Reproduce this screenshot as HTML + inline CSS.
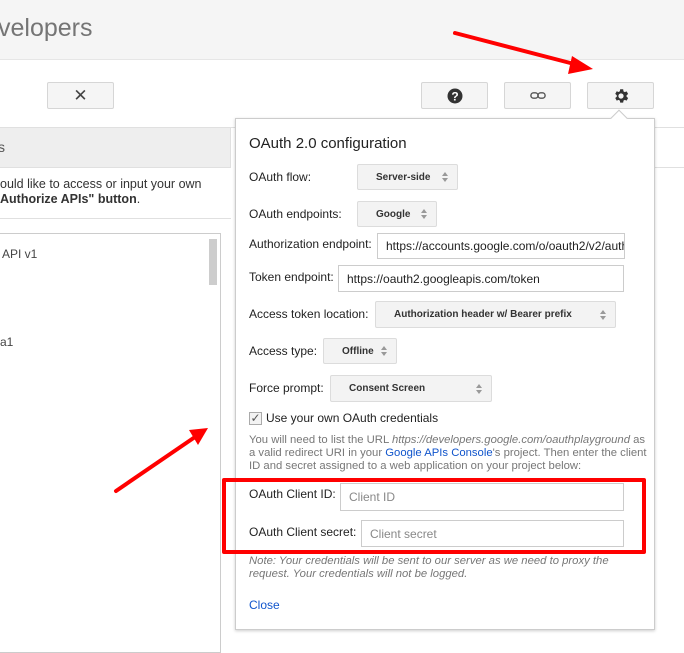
<!DOCTYPE html>
<html><head><style>
*{box-sizing:border-box;margin:0;padding:0}
body{width:684px;height:646px;overflow:hidden;background:#fff;font-family:"Liberation Sans",sans-serif;position:relative;color:#222}
.a{position:absolute}
.btn{position:absolute;top:82px;height:27px;background:#f5f5f5;border:1px solid #d6d6d6;border-radius:2px;display:flex;align-items:center;justify-content:center;color:#444}
.lbl{position:absolute;left:249px;font-size:12px;color:#222}
.sel{position:absolute;background:#f3f3f3;border:1px solid #dcdcdc;border-radius:2px;font-size:10px;font-weight:bold;color:#333;padding-left:18px;display:flex;align-items:center}
.sel:after{content:"";position:absolute;right:9px;top:50%;margin-top:-5px;width:0;height:0;border-left:3px solid transparent;border-right:3px solid transparent;border-bottom:4px solid #999}
.sel:before{content:"";position:absolute;right:9px;top:50%;margin-top:1px;width:0;height:0;border-left:3px solid transparent;border-right:3px solid transparent;border-top:4px solid #999}
.inp{position:absolute;border:1px solid #ccc;background:#fff;font-size:12px;color:#222;padding-left:8px;display:flex;align-items:center;overflow:hidden;white-space:nowrap}
</style></head><body>
<div class="a" style="left:0;top:0;width:684px;height:60px;background:#f5f5f5;border-bottom:1px solid #e6e6e6"></div>
<div class="a" style="left:-2px;top:14px;font-size:25px;color:#757575">velopers</div>
<div class="btn" style="left:47px;width:67px;font-size:17px">✕</div>
<div class="btn" style="left:421px;width:67px"><svg width="16" height="16" viewBox="0 0 16 16"><circle cx="8" cy="8" r="7.5" fill="#333"/><text x="8" y="12.5" font-size="12" font-weight="bold" fill="#fff" text-anchor="middle" font-family="Liberation Sans">?</text></svg></div>
<div class="btn" style="left:504px;width:67px"><svg width="16" height="9" viewBox="0 0 18 10"><rect x="1" y="2" width="8" height="6" rx="3" fill="none" stroke="#555" stroke-width="1.6"/><rect x="9" y="2" width="8" height="6" rx="3" fill="none" stroke="#555" stroke-width="1.6"/></svg></div>
<div class="btn" style="left:587px;width:67px"><svg width="18" height="18" viewBox="0 0 24 24"><path fill="#333" d="M19.4 13a7.5 7.5 0 0 0 0-2l2.1-1.6-2-3.5-2.5 1a7.4 7.4 0 0 0-1.7-1L14.9 3h-4l-.4 2.7a7.4 7.4 0 0 0-1.7 1l-2.5-1-2 3.5L6.4 11a7.5 7.5 0 0 0 0 2l-2.1 1.6 2 3.5 2.5-1a7.4 7.4 0 0 0 1.7 1l.4 2.7h4l.4-2.7a7.4 7.4 0 0 0 1.7-1l2.5 1 2-3.5zM12 15.5A3.5 3.5 0 1 1 12 8.5a3.5 3.5 0 0 1 0 7z"/></svg></div>
<div class="a" style="left:0;top:127px;width:231px;height:41px;background:#eee;border-top:1px solid #e0e0e0;border-bottom:1px solid #e0e0e0;border-right:1px solid #e0e0e0"></div>
<div class="a" style="left:-2px;top:139px;font-size:14px;color:#555">s</div>
<div class="a" style="left:0;top:177px;font-size:12.5px;color:#333;line-height:15px;white-space:nowrap">ould like to access or input your own<br><b>Authorize APIs" button</b>.</div>
<div class="a" style="left:0;top:218px;width:231px;height:1px;background:#e0e0e0"></div>
<div class="a" style="left:0;top:233px;width:221px;height:420px;border:1px solid #ccc;border-left:none"></div>
<div class="a" style="left:209px;top:239px;width:8px;height:46px;background:#cdcdcd"></div>
<div class="a" style="left:2px;top:247px;font-size:12px;color:#444">API v1</div>
<div class="a" style="left:0;top:335px;font-size:12px;color:#444">a1</div>
<div class="a" style="left:231px;top:127px;width:453px;height:1px;background:#e0e0e0"></div>
<div class="a" style="left:655px;top:167px;width:29px;height:1px;background:#e0e0e0"></div>
<div class="a" style="left:235px;top:118px;width:420px;height:512px;background:#fff;border:1px solid #ccc;box-shadow:0 1px 3px rgba(0,0,0,.2)"></div>
<div class="a" style="left:613px;top:112px;width:12px;height:12px;background:#fff;border-left:1px solid #ccc;border-top:1px solid #ccc;transform:rotate(45deg)"></div>
<div class="a" style="left:249px;top:135px;font-size:15px;color:#222">OAuth 2.0 configuration</div>
<div class="lbl" style="top:170px">OAuth flow:</div>
<div class="sel" style="left:357px;top:164px;width:101px;height:26px">Server-side</div>
<div class="lbl" style="top:207px">OAuth endpoints:</div>
<div class="sel" style="left:357px;top:201px;width:80px;height:26px">Google</div>
<div class="lbl" style="top:237px">Authorization endpoint:</div>
<div class="inp" style="left:377px;top:233px;width:248px;height:26px">https://accounts.google.com/o/oauth2/v2/auth</div>
<div class="lbl" style="top:270px">Token endpoint:</div>
<div class="inp" style="left:338px;top:265px;width:286px;height:27px">https://oauth2.googleapis.com/token</div>
<div class="lbl" style="top:307px">Access token location:</div>
<div class="sel" style="left:375px;top:301px;width:241px;height:27px">Authorization header w/ Bearer prefix</div>
<div class="lbl" style="top:344px">Access type:</div>
<div class="sel" style="left:323px;top:338px;width:74px;height:26px">Offline</div>
<div class="lbl" style="top:381px">Force prompt:</div>
<div class="sel" style="left:330px;top:375px;width:162px;height:27px">Consent Screen</div>
<div class="a" style="left:249px;top:412px;width:13px;height:13px;border:1px solid #aaa;background:#f3f3f3;font-size:12px;line-height:11px;text-align:center;color:#555">✓</div>
<div class="lbl" style="left:266px;top:411px">Use your own OAuth credentials</div>
<div class="a" style="left:249px;top:434px;width:398px;font-size:11.3px;line-height:13px;color:#777">You will need to list the URL <i>https://developers.google.com/oauthplayground</i> as a valid redirect URI in your <span style="color:#15c">Google APIs Console</span>'s project. Then enter the client ID and secret assigned to a web application on your project below:</div>
<div class="lbl" style="top:487px">OAuth Client ID:</div>
<div class="inp" style="left:340px;top:483px;width:284px;height:28px;color:#888">Client ID</div>
<div class="lbl" style="top:525px">OAuth Client secret:</div>
<div class="inp" style="left:361px;top:520px;width:263px;height:27px;color:#888">Client secret</div>
<div class="a" style="left:222px;top:478px;width:424px;height:76px;border:4px solid #f00;border-radius:2px"></div>
<div class="a" style="left:249px;top:555px;width:385px;font-size:11.3px;line-height:13px;color:#777;font-style:italic">Note: Your credentials will be sent to our server as we need to proxy the request. Your credentials will not be logged.</div>
<div class="a" style="left:249px;top:598px;font-size:12px;color:#15c">Close</div>
<svg class="a" style="left:0;top:0" width="684" height="646"><g stroke="#f00" stroke-width="4" stroke-linecap="round"><line x1="455" y1="33" x2="578" y2="65"/><line x1="116" y1="491" x2="195" y2="437"/></g><polygon points="593,69 572,56 568,74" fill="#f00"/><polygon points="208,428 189,430 198,445" fill="#f00"/></svg>
</body></html>
